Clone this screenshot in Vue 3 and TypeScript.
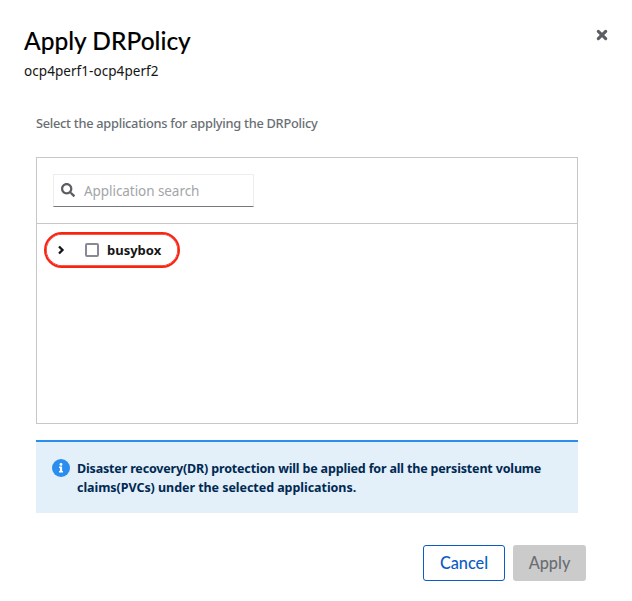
<script setup lang="ts">
import { ref } from 'vue'

interface Application {
  name: string
  selected: boolean
}

const search = ref('')
const applications = ref<Application[]>([{ name: 'busybox', selected: false }])
</script>

<template>
  <main class="modal">
    <header class="header">
      <div>
        <h1 class="title"><span>Apply DRPolicy</span></h1>
        <p class="subtitle"><span>ocp4perf1-ocp4perf2</span></p>
      </div>
      <button class="close" type="button" aria-label="Close">
        <svg width="12" height="12" viewBox="0 0 12 12">
          <path d="M2.3 2.3 9.7 9.7M9.7 2.3 2.3 9.7" fill="none" stroke="#5b5e63" stroke-width="3.1" stroke-linecap="round" />
        </svg>
      </button>
    </header>

    <section class="body">
      <p class="hint"><span>Select the applications for applying the DRPolicy</span></p>
      <div class="panel">
        <div class="toolbar">
          <label class="search">
            <svg width="14" height="14" viewBox="0 0 512 512">
              <path fill="#5b5e63" d="M505 442.700 405.300 343c-4.500-4.500-10.600-7-17-7H372c27.600-35.300 44-79.700 44-128C416 93.100 322.900 0 208 0S0 93.100 0 208s93.100 208 208 208c48.300 0 92.700-16.400 128-44v16.300c0 6.400 2.500 12.500 7 17l99.700 99.700c9.400 9.400 24.600 9.400 33.900 0l28.300-28.300c9.400-9.400 9.400-24.600.1-34zM208 336c-70.700 0-128-57.200-128-128 0-70.700 57.200-128 128-128 70.700 0 128 57.200 128 128 0 70.700-57.200 128-128 128z" />
            </svg>
            <input v-model="search" type="text" placeholder="Application search" />
          </label>
        </div>
        <div v-for="app in applications" :key="app.name" class="row">
          <svg class="caret" width="8" height="10" viewBox="0 0 8 10">
            <path d="M2 1.500 5.500 5 2 8.500" fill="none" stroke="#151515" stroke-width="2.300" />
          </svg>
          <input v-model="app.selected" class="check" type="checkbox" :aria-label="app.name" />
          <span class="name">{{ app.name }}</span>
          <span class="highlight"></span>
        </div>
      </div>

      <div class="alert">
        <svg width="18" height="18" viewBox="0 0 18 18">
          <circle cx="9" cy="9" r="9" fill="#2b8eef" />
          <path fill="#fff" d="M7.500 7.400h2.600v4.700h.9v1.500H7v-1.500h.9V8.900h-.9V7.400z" />
          <circle cx="9" cy="5.400" r="1.400" fill="#fff" />
        </svg>
        <p>
          <span class="line first">Disaster recovery(DR) protection will be applied for all the persistent volume</span>
          <span class="line second">claims(PVCs) under the selected applications.</span>
        </p>
      </div>
    </section>

    <footer class="footer">
      <button class="btn cancel" type="button"><span>Cancel</span></button>
      <button class="btn apply" type="button" disabled><span>Apply</span></button>
    </footer>
  </main>
</template>

<style>
body {
  background: #fff;
}
</style>

<style scoped>
* {
  box-sizing: border-box;
}

.modal {
  width: 632px;
  height: 601px;
  padding: 24px 24px 0;
  font-family: "Noto Sans", "Liberation Sans", sans-serif;
  font-size: 13px;
  color: #151515;
  background: #fff;
}

h1,
p {
  margin: 0;
}

button {
  padding: 0;
  border: 0;
  background: none;
  font-family: inherit;
}

.header {
  display: flex;
  justify-content: space-between;
  height: 91px;
}

.title {
  font-family: Lato, sans-serif;
  font-size: 24.5px;
  font-weight: 500;
  line-height: 33px;
  -webkit-text-stroke: 0.1px #000;
  color: #000;
  white-space: nowrap;
}

.subtitle {
  font-size: 13.5px;
  line-height: 21px;
  margin-top: 4px;
  letter-spacing: 0.06px;
}

.close {
  width: 12px;
  height: 12px;
  margin-top: 5px;
}

.close svg {
  display: block;
}

.body {
  padding: 0 6px 0 12px;
  margin-right: 24px;
}

.hint {
  height: 42px;
  line-height: 17px;
  font-size: 12.8px;
  letter-spacing: -0.27px;
  font-weight: 500;
  color: #6a6e73;
  white-space: nowrap;
}

.panel {
  width: 542px;
  height: 267px;
  border: 1px solid #c7c7c7;
}

.toolbar {
  height: 66px;
  padding: 16px;
  border-bottom: 1px solid #c7c7c7;
}

.search {
  display: flex;
  align-items: center;
  gap: 9px;
  width: 201px;
  height: 33px;
  padding: 0 7px;
  border: 1px solid #ededed;
  border-bottom-color: #77797c;
}

.search svg {
  flex: none;
  margin-top: -2px;
}

.search input {
  width: 150px;
  padding: 0;
  border: 0;
  outline: 0;
  font: 13.5px "Noto Sans", sans-serif;
  letter-spacing: -0.06px;
  background: none;
}

.search input::placeholder {
  color: #a3a5a8;
}

.row {
  position: relative;
  display: flex;
  align-items: center;
  height: 52px;
  padding-left: 20px;
}

.check {
  appearance: none;
  width: 14px;
  height: 14px;
  margin: 0 8px 0 20px;
  border: 2px solid #8b8798;
  border-radius: 2px;
  background: #fff;
}

.name {
  font-size: 13px;
  font-weight: 700;
}

.highlight {
  position: absolute;
  left: 6.5px;
  top: 7.5px;
  width: 136px;
  height: 36px;
  border: 2px solid #f92311;
  border-radius: 18px;
  box-shadow: inset 0 0 0 0.7px #f92311;
}

.alert {
  display: flex;
  gap: 7px;
  width: 542px;
  height: 73px;
  margin-top: 16px;
  padding: 17px 16px;
  border-top: 2px solid #2b8eef;
  background: #e3eff9;
  color: #002952;
  font-size: 12.5px;
  font-weight: 700;
  line-height: 19px;
  white-space: nowrap;
}

.alert svg {
  flex: none;
}

.line {
  display: block;
}

.first {
  letter-spacing: -0.165px;
}

.second {
  letter-spacing: -0.05px;
}

.footer {
  display: flex;
  justify-content: flex-end;
  gap: 8px;
  margin-top: 32px;
  padding-right: 22px;
}

.btn {
  height: 36px;
  padding-bottom: 1px;
  border-radius: 3px;
  font-family: Lato, sans-serif;
  font-size: 16.3px;
  font-weight: 500;
}

.cancel {
  width: 82px;
  border: 1px solid #0b5cc4;
  color: #0b5cc4;
}

.apply {
  width: 73px;
  background: #cbcbcb;
  color: #6a6e73;
}
</style>
